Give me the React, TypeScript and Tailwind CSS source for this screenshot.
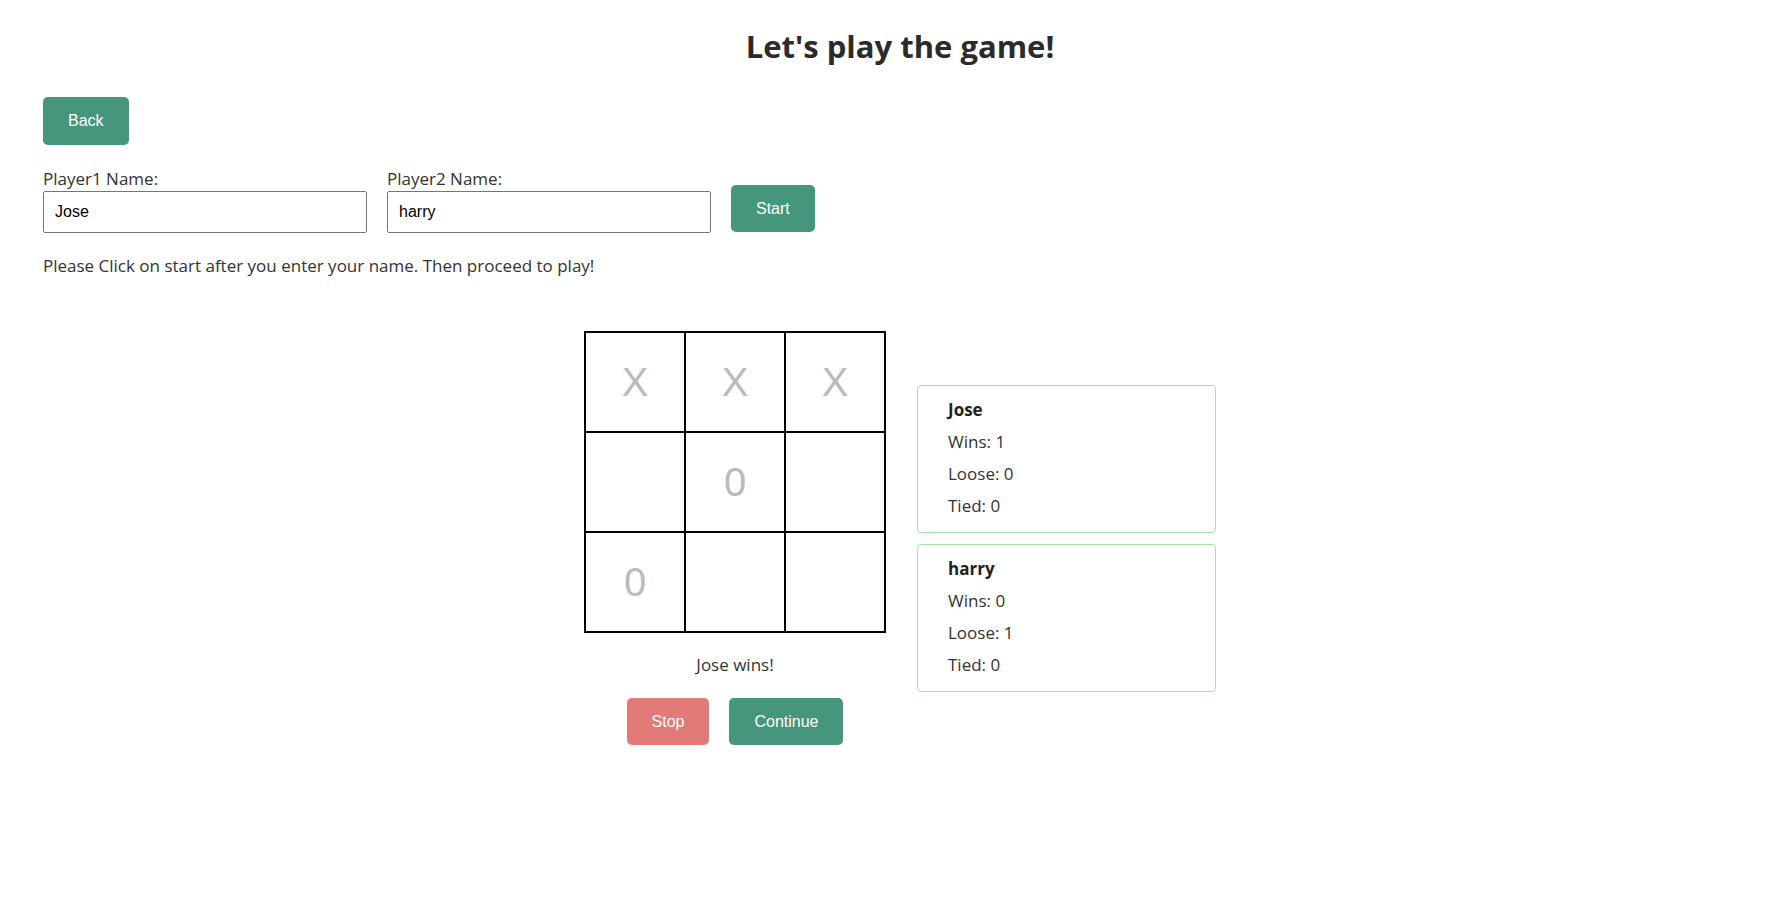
import { useState } from 'react';

type Stats = { name: string; wins: number; loose: number; tied: number };

const btn =
    "h-[47px] px-[25px] rounded-[5px] text-white text-[16px] font-['Liberation_Sans',Arial,sans-serif]";

function StatCard({ s }: { s: Stats }) {
    return (
        <div className="w-[299px] border border-[#a3e2a6] rounded-[4px] pl-[30px] pt-[8px] pb-[10px] text-[17px] leading-[32px]">
            <p className="font-bold text-[#222]">{s.name}</p>
            <p>Wins: {s.wins}</p>
            <p>Loose: {s.loose}</p>
            <p>Tied: {s.tied}</p>
        </div>
    );
}

export default function App() {
    const [p1, setP1] = useState('Jose');
    const [p2, setP2] = useState('harry');
    const board = ['X', 'X', 'X', '', '0', '', '0', '', ''];

    const stats: Stats[] = [
        { name: 'Jose', wins: 1, loose: 0, tied: 0 },
        { name: 'harry', wins: 0, loose: 1, tied: 0 },
    ];

    return (
        <div className="min-h-screen bg-white pl-[43px] pr-[32px] font-['Open_Sans',sans-serif] text-[17px] text-[#333]">
            <h1 className="pt-[26px] text-center text-[31px] font-bold leading-[40px] text-[#2b2b2b]">
                Let's play the game!
            </h1>

            <button className={`${btn} mt-[31px] h-[48px] bg-[#45967d]`}>Back</button>

            <div className="mt-[22px] flex items-end gap-[20px]">
                <label className="flex flex-col">
                    <span className="leading-[24px]">Player1 Name:</span>
                    <input
                        value={p1}
                        onChange={e => setP1(e.target.value)}
                        className="w-[324px] h-[42px] border border-[#767676] rounded-[2px] px-[11px] text-[16px] text-black font-['Liberation_Sans',Arial,sans-serif] outline-none"
                    />
                </label>
                <label className="flex flex-col">
                    <span className="leading-[24px]">Player2 Name:</span>
                    <input
                        value={p2}
                        onChange={e => setP2(e.target.value)}
                        className="w-[324px] h-[42px] border border-[#767676] rounded-[2px] px-[11px] text-[16px] text-black font-['Liberation_Sans',Arial,sans-serif] outline-none"
                    />
                </label>
                <button className={`${btn} mb-[1px] bg-[#45967d]`}>Start</button>
            </div>

            <p className="mt-[21px] leading-[24px]">
                Please Click on start after you enter your name. Then proceed to play!
            </p>

            <div className="mt-[53px] flex items-center justify-center gap-[31px]">
                <div className="flex flex-col items-center">
                    <div className="grid grid-cols-3 border border-black">
                        {board.map((c, i) => (
                            <div
                                key={i}
                                className="w-[100px] h-[100px] border border-black flex items-center justify-center text-[40px] text-[#bbb] font-['Liberation_Sans',Arial,sans-serif]"
                            >
                                {c}
                            </div>
                        ))}
                    </div>
                    <p className="mt-[20px] leading-[24px]">Jose wins!</p>
                    <div className="mt-[21px] flex gap-[20px]">
                        <button className={`${btn} bg-[#e27a77]`}>Stop</button>
                        <button className={`${btn} bg-[#45967d]`}>Continue</button>
                    </div>
                </div>

                <div className="flex flex-col gap-[11px]">
                    {stats.map(s => (
                        <StatCard key={s.name} s={s} />
                    ))}
                </div>
            </div>
        </div>
    );
}
